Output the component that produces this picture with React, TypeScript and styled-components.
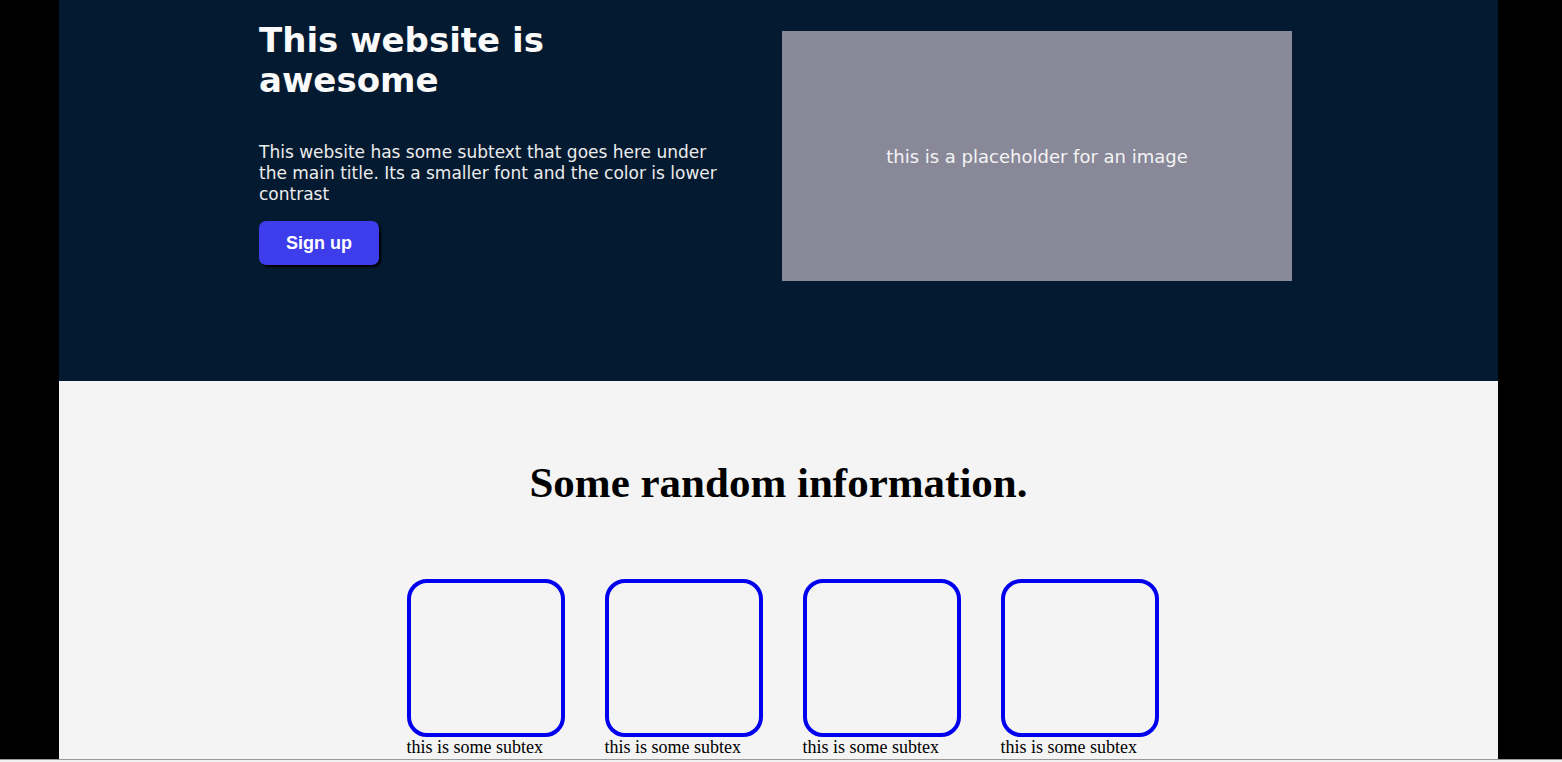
import React from "react";
import styled, { createGlobalStyle } from "styled-components";

const Global = createGlobalStyle`
  html, body { margin: 0; padding: 0; background: #000; }
  body { font-family: "Liberation Serif", serif; overflow: hidden; }
`;

const Frame = styled.div`
  width: 1562px;
  height: 762px;
  background: #000;
  display: flex;
  flex-direction: column;
  overflow: hidden;
`;

const Page = styled.div`
  width: 1439px;
  margin-left: 59px;
  height: 759px;
  display: flex;
  flex-direction: column;
  overflow: hidden;
`;

const Hero = styled.section`
  background: #041a30;
  height: 381px;
  flex-shrink: 0;
  display: flex;
  justify-content: center;
  padding: 20px 6px 0 0;
  box-sizing: border-box;
`;

const HeroInner = styled.div`
  width: 1033px;
  display: flex;
  justify-content: space-between;
  align-items: flex-start;
`;

const HeroText = styled.div`
  width: 470px;
  display: flex;
  flex-direction: column;
  font-family: "DejaVu Sans", Verdana, sans-serif;
  color: #f5f5f5;
`;

const Title = styled.h1`
  margin: 0;
  font-size: 34px;
  line-height: 40px;
  font-weight: bold;
  color: #fafafa;
  width: 320px;
`;

const Sub = styled.p`
  margin: 42px 0 0;
  font-size: 17px;
  line-height: 21px;
  color: #ececec;
`;

const Button = styled.button`
  margin-top: 16px;
  width: 120px;
  height: 44px;
  border: none;
  border-radius: 7px;
  background: #3d3deb;
  color: #fff;
  font-family: "Liberation Sans", Arial, sans-serif;
  font-weight: bold;
  font-size: 18px;
  box-shadow: 2px 2px 2px #000;
  cursor: pointer;
`;

const Placeholder = styled.div`
  margin-top: 11px;
  width: 510px;
  height: 250px;
  background: #888899;
  display: flex;
  align-items: center;
  justify-content: center;
  font-family: "DejaVu Sans", Verdana, sans-serif;
  font-size: 18px;
  color: #f4f4f4;
`;

const Info = styled.section`
  flex: 1;
  background: #f4f4f4;
  display: flex;
  flex-direction: column;
  align-items: center;
`;

const Heading = styled.h2`
  margin: 77px 0 0;
  font-family: "Liberation Serif", "Times New Roman", serif;
  font-weight: bold;
  font-size: 43px;
  line-height: 50px;
  color: #000;
`;

const Cards = styled.div`
  display: flex;
  gap: 40px;
  margin-top: 71px;
  padding-left: 8px;
`;

const Card = styled.div`
  display: flex;
  flex-direction: column;
  width: 158px;
`;

const Box = styled.div`
  width: 150px;
  height: 150px;
  border: 4px solid #0000ee;
  border-radius: 20px;
`;

const Caption = styled.div`
  font-family: "Liberation Serif", "Times New Roman", serif;
  font-size: 18px;
  line-height: 21px;
  color: #000;
  white-space: nowrap;
`;

const StatusBar = styled.div`
  height: 3px;
  background: #f0f0f0;
  border-top: 1px solid #9a9a9a;
  box-sizing: border-box;
  flex-shrink: 0;
`;

export default function App() {
  return (
    <Frame>
      <Global />
      <Page>
        <Hero>
          <HeroInner>
            <HeroText>
              <Title>This website is awesome</Title>
              <Sub>
                This website has some subtext that goes here under the main title. Its a smaller font and the color is lower contrast
              </Sub>
              <Button>Sign up</Button>
            </HeroText>
            <Placeholder>this is a placeholder for an image</Placeholder>
          </HeroInner>
        </Hero>
        <Info>
          <Heading>Some random information.</Heading>
          <Cards>
            {[0, 1, 2, 3].map((i) => (
              <Card key={i}>
                <Box />
                <Caption>this is some subtex</Caption>
              </Card>
            ))}
          </Cards>
        </Info>
      </Page>
      <StatusBar />
    </Frame>
  );
}
